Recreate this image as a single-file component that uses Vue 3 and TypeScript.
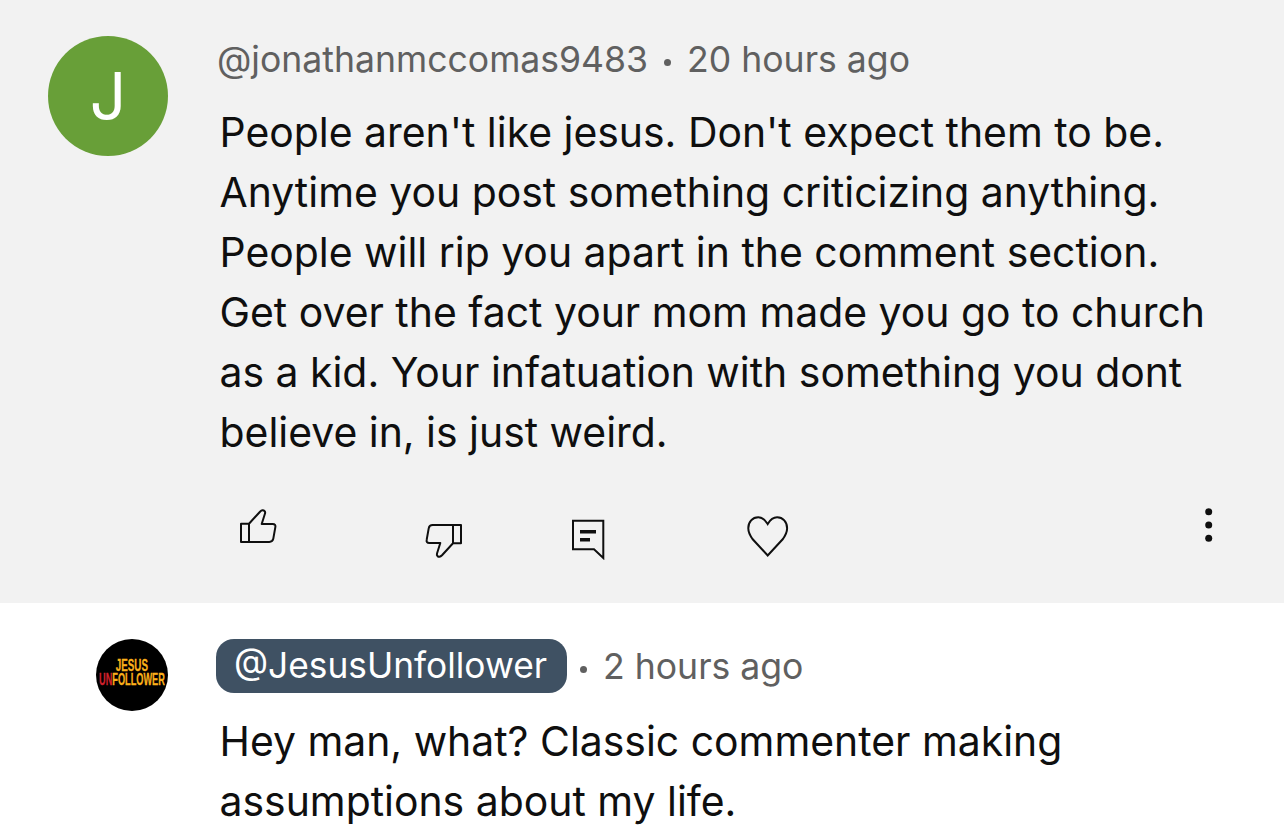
<script setup lang="ts">
const lines: string[] = [
  "People aren't like jesus. Don't expect them to be.",
  'Anytime you post something criticizing anything.',
  'People will rip you apart in the comment section.',
  'Get over the fact your mom made you go to church',
  'as a kid. Your infatuation with something you dont',
  'believe in, is just weird.',
]
const replyLines: string[] = ['Hey man, what? Classic commenter making', 'assumptions about my life.']
</script>

<template>
  <main class="page">
    <section class="comment">
      <div class="avatar">J</div>
      <div class="content">
        <div class="meta"><span>@jonathanmccomas9483</span><i class="dot"></i><span>20 hours ago</span></div>
        <div class="text"><div v-for="l in lines" :key="l">{{ l }}</div></div>
        <div class="actions">
          <svg class="like" width="38" height="36" viewBox="0 0 38 36" fill="none" stroke="#0f0f0f" stroke-width="2" stroke-linejoin="round"><path d="M1 15.7h8V34H1zM9 15.7 20 3.7Q22.7 1 24.500 3Q25.500 4 25 5.500L21.700 16H32.700Q36 16 35.300 19.300L33.300 30.700Q32.700 34 29.300 34H9"/></svg>
          <svg class="dislike" width="38" height="36" viewBox="0 0 38 36" fill="none" stroke="#0f0f0f" stroke-width="2" stroke-linejoin="round"><g transform="rotate(180 19 18)"><path d="M1 15.700h8V34H1zM9 15.700 20 3.700Q22.700 1 24.500 3Q25.500 4 25 5.500L21.700 16H32.700Q36 16 35.300 19.300L33.300 30.700Q32.700 34 29.300 34H9"/></g></svg>
          <svg class="reply" width="36" height="42" viewBox="0 0 36 42" fill="none" stroke="#0f0f0f" stroke-width="2"><path d="M3 2.700H33.300V40L24 31.300H3Z"/><path d="M10 13.800H26M10 21.800H20" stroke-width="3.600"/></svg>
          <svg class="heart" width="42" height="42" viewBox="0 0 42 42" fill="none" stroke="#0f0f0f" stroke-width="2"><path d="M20.700 8C18 3.500 15 1.300 11.300 1.300C5.500 1.300 1.300 6 1.300 12.300C1.300 16 3 19.500 5.500 23L20.700 39.500L35.900 23C38.400 19.500 40.100 16 40.100 12.300C40.100 6 35.900 1.300 30.100 1.300C26.400 1.300 23.400 3.500 20.700 8Z"/></svg>
          <svg class="more" width="8" height="34" viewBox="0 0 8 34" fill="#0f0f0f"><circle cx="3.700" cy="3.700" r="3.500"/><circle cx="3.700" cy="17" r="3.500"/><circle cx="3.700" cy="30.300" r="3.500"/></svg>
        </div>
      </div>
    </section>
    <section class="reply-row">
      <div class="logo"><span class="l1">JESUS</span><span class="l2"><b>UN</b>FOLLOWER</span></div>
      <div class="content">
        <div class="meta rmeta"><span class="chip">@JesusUnfollower</span><i class="dot rdot"></i><span>2 hours ago</span></div>
        <div class="text rtext"><div v-for="l in replyLines" :key="l">{{ l }}</div></div>
      </div>
    </section>
  </main>
</template>

<style>
html, body { margin: 0; background: #fff; overflow: hidden; }
</style>
<style scoped>
.page { width: 1284px; height: 831px; overflow: hidden; font-family: Inter, "Liberation Sans", sans-serif; color: #0f0f0f; }
.comment { height: 603px; box-sizing: border-box; background: #f2f2f2; display: flex; padding: 36px 0 0 48px; gap: 52px; }
.avatar { width: 120px; height: 120px; border-radius: 50%; background: #689f38; color: #fff; font-size: 64px; font-weight: 400; display: flex; align-items: center; justify-content: center; flex: none; padding-bottom: 2px; box-sizing: border-box; }
.content { flex: 1; min-width: 0; }
.meta { display: flex; align-items: center; height: 48px; font-size: 35.600px; color: #606060; white-space: nowrap; margin-left: -3px; margin-top: -1px; }
.dot { width: 7px; height: 7px; border-radius: 50%; background: #606060; margin: 6px 16px 0; }
.text { font-size: 40.900px; line-height: 60px; margin-top: 19px; margin-left: -0.500px; white-space: nowrap; }
.actions { position: relative; height: 60px; margin-top: 42px; }
.actions svg { position: absolute; }
.like { left: 20px; top: 4px; }
.dislike { left: 204px; top: 19px; }
.reply { left: 350px; top: 14px; }
.heart { left: 527px; top: 12px; }
.more { left: 985px; top: 4px; }
.reply-row { display: flex; padding: 36px 0 0 96px; gap: 48px; }
.logo { width: 72px; height: 72px; box-sizing: border-box; padding-bottom: 6px; border-radius: 50%; background: #000; flex: none; display: flex; flex-direction: column; align-items: center; justify-content: center; gap: 1px; font: 700 17px/13px "Liberation Sans", sans-serif; color: #fbb01a; -webkit-text-stroke: 0.3px currentColor; }
.l1 { transform: scaleX(0.575); }
.l2 { transform: scaleX(0.54); white-space: nowrap; }
.l2 b { color: #d0202c; }
.rmeta { height: 54px; margin-top: 0; margin-left: 0; }
.chip { background: #3f5163; color: #fff; border-radius: 18px; padding: 0 20px 0 18px; height: 54px; line-height: 54px; font-size: 35.300px; }
.rdot { margin: 6px 16px 0 13px; }
.rtext { margin-top: 18px; margin-left: 3.500px; }
</style>
